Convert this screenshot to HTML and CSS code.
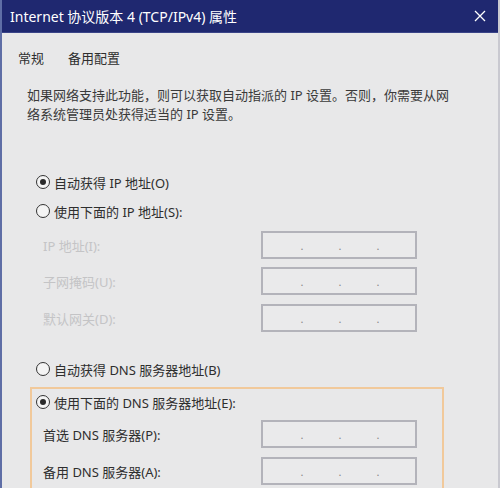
FILE: index.html
```html
<!DOCTYPE html>
<html lang="zh-CN">
<head>
<meta charset="utf-8">
<link rel="stylesheet" href="styles.css">
</head>
<body>
<div class="window">
  <div class="titlebar">
    <span class="title">Internet 协议版本 4 (TCP/IPv4) 属性</span>
    <svg class="close" width="12" height="12" viewBox="0 0 12 12"><path d="M1 1L11 11M11 1L1 11" stroke="#fff" stroke-width="1.3" fill="none"/></svg>
  </div>
  <div class="content">
    <div class="tabs">
      <span class="tab">常规</span>
      <span class="tab">备用配置</span>
    </div>
    <p class="desc">如果网络支持此功能，则可以获取自动指派的 IP 设置。否则，你需要从网<br>络系统管理员处获得适当的 IP 设置。</p>

    <div class="radio-row r1"><span class="radio on"></span><span>自动获得 IP 地址(O)</span></div>
    <div class="radio-row r2"><span class="radio"></span><span>使用下面的 IP 地址(S):</span></div>

    <div class="field f1 disabled"><span class="label">IP 地址(I):</span><div class="ip"><i>.</i><i>.</i><i>.</i></div></div>
    <div class="field f2 disabled"><span class="label">子网掩码(U):</span><div class="ip"><i>.</i><i>.</i><i>.</i></div></div>
    <div class="field f3 disabled"><span class="label">默认网关(D):</span><div class="ip"><i>.</i><i>.</i><i>.</i></div></div>

    <div class="radio-row r3"><span class="radio"></span><span>自动获得 DNS 服务器地址(B)</span></div>

    <div class="dnsbox">
      <div class="radio-row r4"><span class="radio on"></span><span>使用下面的 DNS 服务器地址(E):</span></div>
      <div class="field f4"><span class="label">首选 DNS 服务器(P):</span><div class="ip"><i>.</i><i>.</i><i>.</i></div></div>
      <div class="field f5"><span class="label">备用 DNS 服务器(A):</span><div class="ip"><i>.</i><i>.</i><i>.</i></div></div>
    </div>
  </div>
</div>
</body>
</html>
```

FILE: styles.css
```css
html, body {
  margin: 0;
  padding: 0;
  background: #e8e8e9;
  font-family: "Noto Sans", "Noto Sans CJK SC", sans-serif;
  color: #2e2e2e;
  font-size: 13px;
}
.window {
  width: 500px;
  height: 488px;
  box-sizing: border-box;
  border-left: 2px solid #5f6ea6;
  border-right: 2px solid #c9c9d0;
  overflow: hidden;
}
.titlebar {
  height: 32px;
  margin-left: -2px;
  margin-right: -2px;
  background: #1f2870;
  color: #fff;
  display: flex;
  align-items: center;
  justify-content: space-between;
  padding: 0 14px 0 10px;
  font-size: 14px;
  border-bottom: 1px solid #3a4488;
}
.title { line-height: 1; position: relative; top: 1px; }
.close { display: block; }
.tabs {
  height: 50px;
  display: flex;
  align-items: center;
  padding-left: 16px;
  gap: 24px;
}
.tab { line-height: 1; }
.desc {
  margin: 3px 0 0 25px;
  line-height: 19px;
  color: #3a3a3a;
}
.radio-row {
  display: flex;
  align-items: center;
  height: 22px;
  padding-left: 34px;
  gap: 4px;
}
.radio {
  width: 12px;
  height: 12px;
  border: 1px solid #333;
  border-radius: 50%;
  background: #f4f4f4;
  display: flex;
  align-items: center;
  justify-content: center;
}
.radio.on::after {
  content: "";
  width: 6px;
  height: 6px;
  border-radius: 50%;
  background: #2a2a2a;
}
.r1 { margin-top: 47px; }
.r2 { margin-top: 7px; }
.field {
  display: flex;
  align-items: center;
  height: 28px;
  padding-left: 41px;
}
.label { width: 218px; }
.disabled .label { color: #c4c4c6; }
.ip {
  width: 156px;
  height: 28px;
  box-sizing: border-box;
  border: 2px solid #b3b3ba;
  background: #eaeaeb;
  display: flex;
  align-items: center;
  justify-content: center;
  gap: 34px;
  padding-left: 2px;
}
.ip i {
  font-style: normal;
  color: #888;
  font-size: 11px;
  line-height: 1;
  width: 4px;
  text-align: center;
}
.f1 { margin-top: 9px; }
.f2 { margin-top: 8px; }
.f3 { margin-top: 9px; }
.r3 { margin-top: 26px; }
.dnsbox {
  margin: 7px 0 0 28px;
  width: 414px;
  box-sizing: border-box;
  border: 2px solid #f1c99b;
  border-bottom: none;
  padding-top: 2px;
  height: 120px;
}
.dnsbox .radio-row { padding-left: 4px; }
.dnsbox .field { padding-left: 11px; }
.f4 { margin-top: 7px; }
.f5 { margin-top: 9px; }
```
